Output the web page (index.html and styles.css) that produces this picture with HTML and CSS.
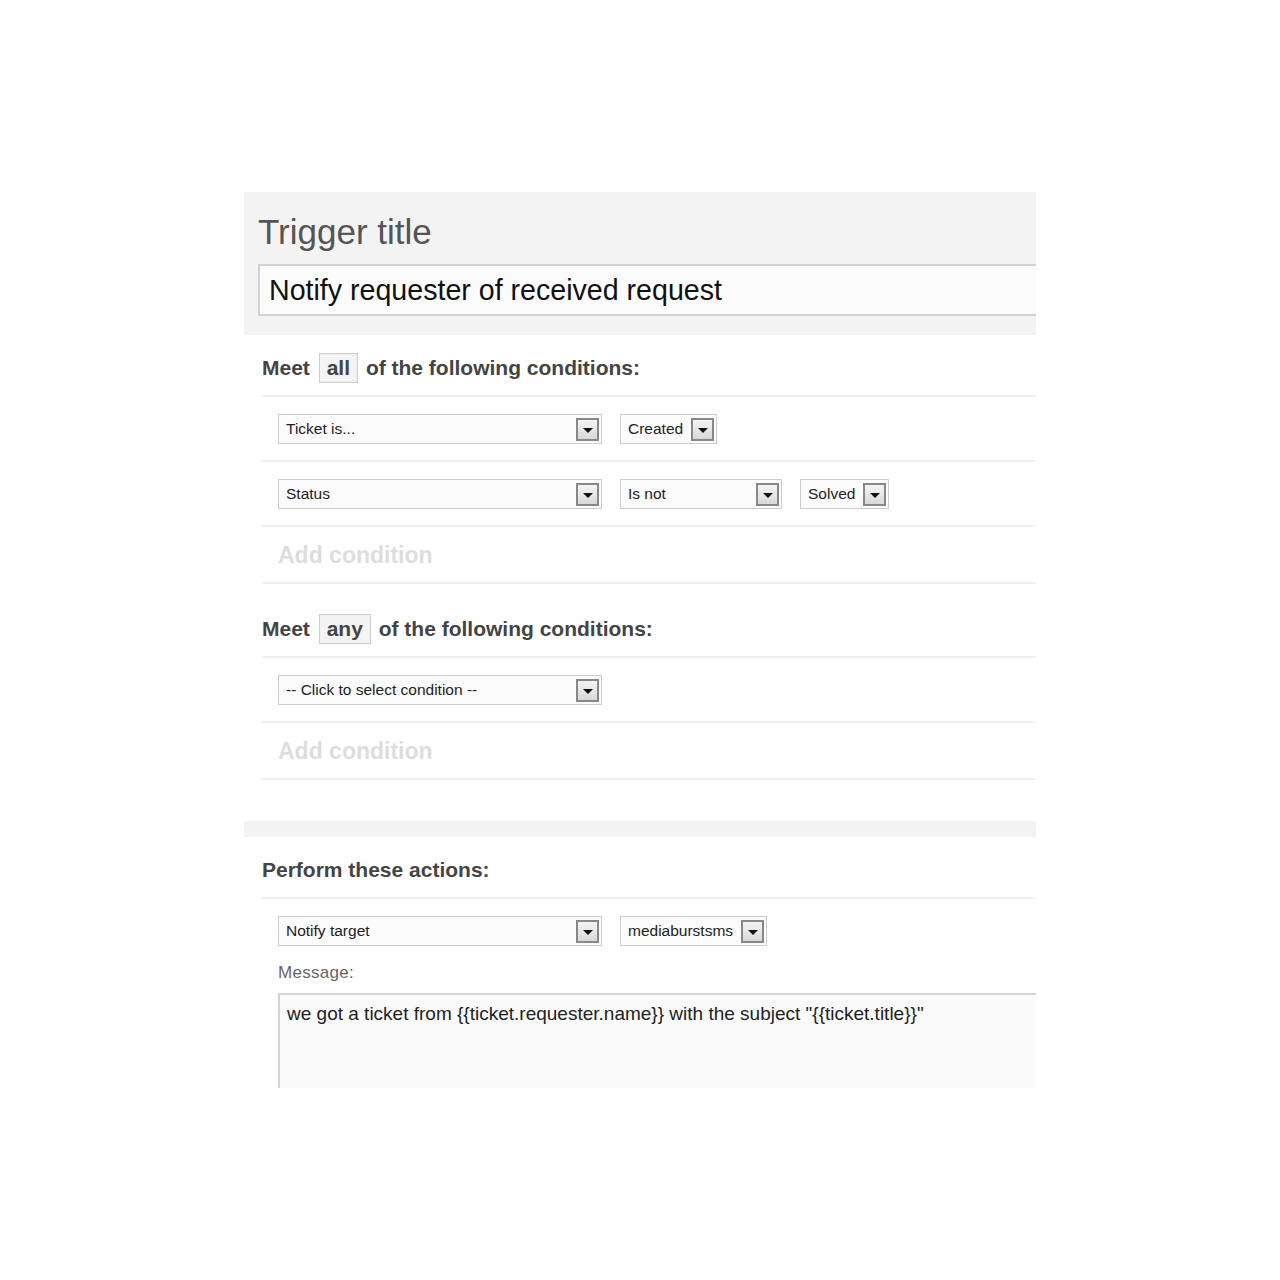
FILE: index.html
```html
<!DOCTYPE html>
<html lang="en">
<head>
    <meta charset="UTF-8">
    <meta name="viewport" content="width=device-width, initial-scale=1.0">
    <title>Edit trigger</title>
    <link rel="stylesheet" href="styles.css">
</head>
<body>
    <div class="trigger-form">
        <!-- Title -->
        <div class="title-panel">
            <h1>Trigger title</h1>
            <div class="title-input">Notify requester of received request</div>
        </div>

        <!-- Conditions: all -->
        <div class="section">
            <h2>Meet <span class="mode">all</span> of the following conditions:</h2>
            <div class="rule-row">
                <div class="select wide"><span>Ticket is...</span><i class="arrow"></i></div>
                <div class="select"><span>Created</span><i class="arrow"></i></div>
            </div>
            <div class="rule-row">
                <div class="select wide"><span>Status</span><i class="arrow"></i></div>
                <div class="select mid"><span>Is not</span><i class="arrow"></i></div>
                <div class="select"><span>Solved</span><i class="arrow"></i></div>
            </div>
            <div class="add-row">Add condition</div>
        </div>

        <!-- Conditions: any -->
        <div class="section spaced">
            <h2>Meet <span class="mode">any</span> of the following conditions:</h2>
            <div class="rule-row">
                <div class="select wide"><span>-- Click to select condition --</span><i class="arrow"></i></div>
            </div>
            <div class="add-row">Add condition</div>
        </div>

        <div class="divider"></div>

        <!-- Actions -->
        <div class="section">
            <h2>Perform these actions:</h2>
            <div class="rule-row action">
                <div class="select wide"><span>Notify target</span><i class="arrow"></i></div>
                <div class="select"><span>mediaburstsms</span><i class="arrow"></i></div>
            </div>
            <div class="message">
                <label>Message:</label>
                <div class="textarea">we got a ticket from {{ticket.requester.name}} with the subject "{{ticket.title}}"</div>
            </div>
        </div>
    </div>
</body>
</html>
```

FILE: styles.css
```css
/* General */
body {
    margin: 0;
    background: #fff;
    font-family: 'Liberation Sans', Arial, sans-serif;
    color: #333;
}

.trigger-form {
    width: 792px;
    height: 896px;
    margin: 192px 0 0 244px;
    overflow: hidden;
}

/* Title panel */
.title-panel {
    background: #f3f3f3;
    padding: 18px 0 19px 14px;
}

.title-panel h1 {
    margin: 0 0 10px;
    font-size: 35px;
    font-weight: normal;
    color: #555;
    line-height: 44px;
}

.title-input {
    width: 900px;
    height: 48px;
    line-height: 48px;
    border: 2px solid #d2d2d2;
    background: #fbfbfb;
    padding-left: 9px;
    font-size: 28.6px;
    color: #111;
}

/* Sections */
.section {
    padding-left: 18px;
}

.section.spaced h2 {
    padding-top: 30px;
}

.section h2 {
    margin: 0;
    padding: 18px 0 12px;
    font-size: 21px;
    font-weight: bold;
    color: #444;
    line-height: 30px;
    border-bottom: 2px solid #f0f0f0;
}

.mode {
    display: inline-block;
    border: 1px solid #ccc;
    background: #f3f3f3;
    padding: 0 7px;
    line-height: 28px;
    margin: 0 2px 0 3px;
}

.rule-row {
    display: flex;
    gap: 18px;
    padding: 17px 16px 16px;
    border-bottom: 2px solid #f0f0f0;
}

.rule-row.action {
    border-bottom: none;
    padding-bottom: 0;
}

/* Dropdowns */
.select {
    display: flex;
    align-items: center;
    height: 28px;
    border: 1px solid #ccc;
    background: #fbfbfb;
    padding: 0 2px 0 7px;
    font-size: 15.5px;
    color: #222;
}

.select span {
    flex: 1;
    padding-right: 8px;
    white-space: nowrap;
}

.select.wide {
    width: 313px;
}

.select.mid {
    width: 151px;
}

.arrow {
    position: relative;
    width: 19px;
    height: 19px;
    border: 2px solid #888;
    background: linear-gradient(#f4f4f4, #d8d8d8);
}

.arrow::after {
    content: "";
    position: absolute;
    left: 5px;
    top: 8px;
    border-left: 5px solid transparent;
    border-right: 5px solid transparent;
    border-top: 5px solid #111;
}

.add-row {
    padding: 13px 16px 12px;
    font-size: 23px;
    font-weight: bold;
    color: #ddd;
    line-height: 30px;
    border-bottom: 2px solid #f0f0f0;
}

.divider {
    height: 16px;
    background: #f3f3f3;
    margin-top: 41px;
}

/* Message */
.message {
    padding-left: 16px;
}

.message label {
    display: block;
    padding-top: 17px;
    font-size: 17px;
    letter-spacing: 0.3px;
    color: #666;
    line-height: 20px;
    margin-bottom: 10px;
}

.textarea {
    width: 900px;
    height: 200px;
    border: 2px solid #d2d2d2;
    background: #fafafa;
    padding: 8px 7px;
    font-size: 19px;
    line-height: 22px;
    color: #222;
}
```
